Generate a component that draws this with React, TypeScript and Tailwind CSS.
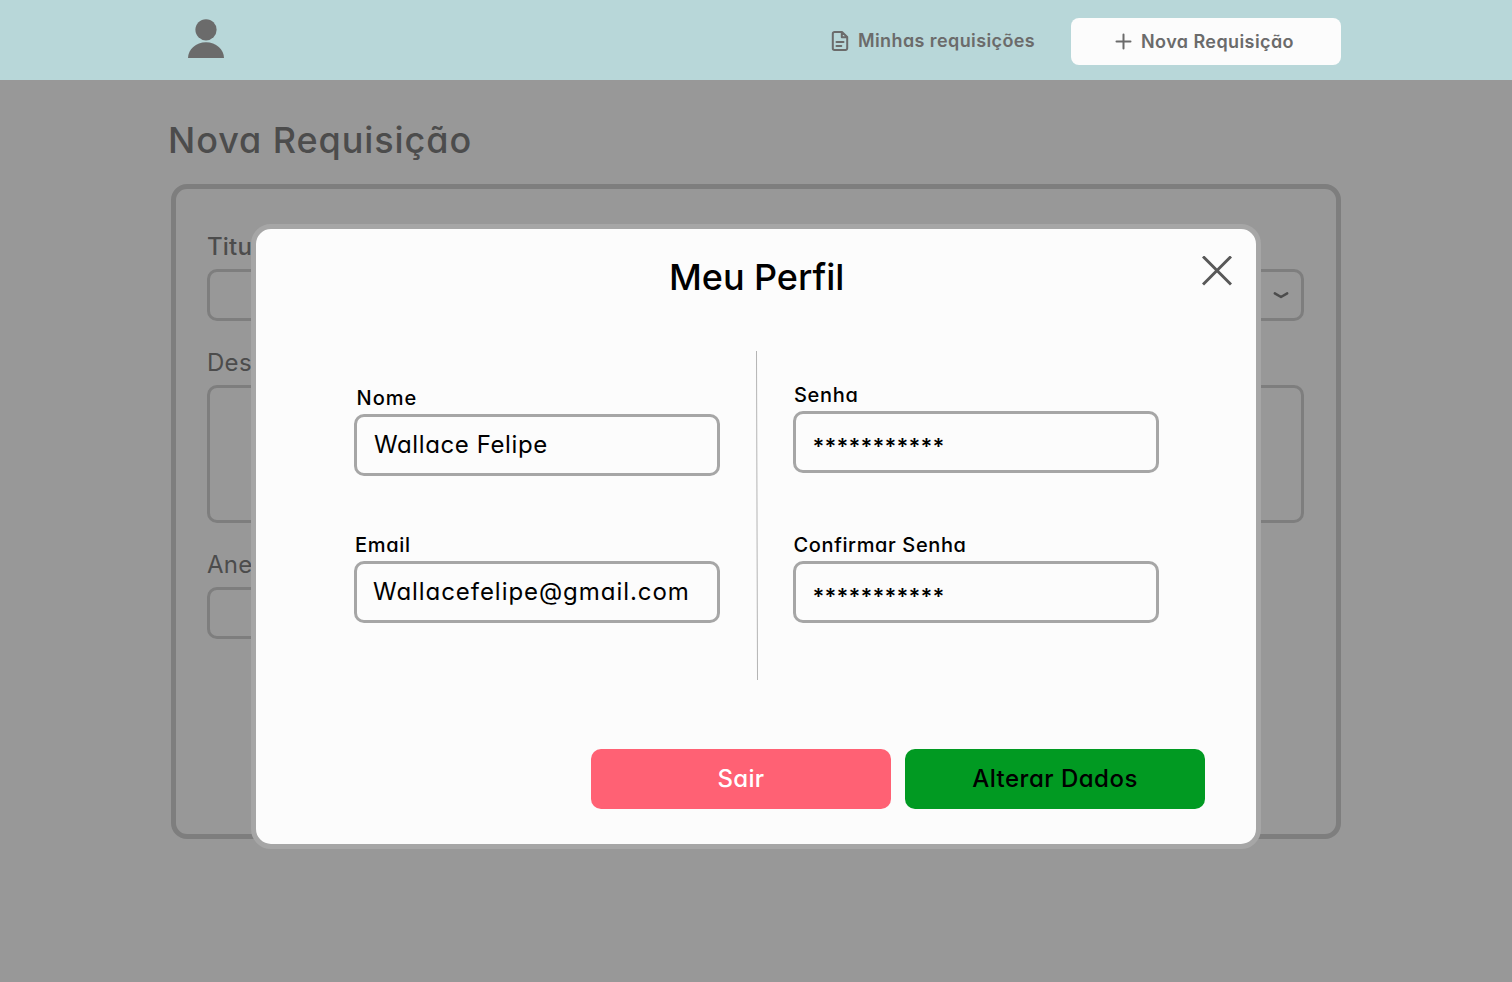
import type { ReactNode } from "react";

function Field({ label, labelClass, children }: { label: string; labelClass: string; children: ReactNode }) {
  return (
    <div className="w-[366px]">
      <div className={`h-[30px] text-xl leading-[30px] font-medium whitespace-nowrap ${labelClass}`}>{label}</div>
      <div className="mt-px flex h-[62px] items-center rounded-[10px] border-[3px] border-[#a6a6a6] whitespace-nowrap">
        {children}
      </div>
    </div>
  );
}

function Password() {
  return <span className="pt-[8px] pl-[16.500px] text-[22px] leading-[30px] font-semibold tracking-[0.12px]">***********</span>;
}

export default function App() {
  return (
    <div className="relative h-[982px] w-[1512px] overflow-hidden bg-[#989898] font-['Inter',sans-serif] [font-feature-settings:'cv11']">
      <header className="flex h-20 items-start bg-[#b8d7d9] pl-[188px] text-lg font-semibold text-[#6b6b6b]">
        <svg className="mt-[18px] h-[41px] w-9" viewBox="0 0 36 41" fill="#6b6b6b">
          <circle cx="18" cy="11.8" r="10.6" />
          <path d="M0 40.1C0 31.5 8 24.2 18 24.2s18 7.300 18 15.900z" />
        </svg>
        <a className="mt-[26px] ml-[606px] flex h-[30px] w-[241px] items-center whitespace-nowrap">
          <svg className="h-[22px] w-5 shrink-0" viewBox="0 0 20 22" fill="none" stroke="#6b6b6b" strokeWidth="2" strokeLinecap="round" strokeLinejoin="round">
            <path d="M12 2H4.500A1.700 1.700 0 0 0 2.800 3.700v14.600A1.700 1.700 0 0 0 4.500 20h11a1.700 1.700 0 0 0 1.700-1.700V7zM11.800 2v5.300h5.200M6.500 12h7M6.500 16h4.800" />
          </svg>
          <span className="ml-2 tracking-[0.4px]">Minhas requisições</span>
        </a>
        <button className="mt-[18px] flex h-[47px] w-[270px] items-center rounded-lg bg-[#fcfcfc] pl-[44px] whitespace-nowrap">
          <svg className="size-[17px] shrink-0" viewBox="0 0 17 17" stroke="#6b6b6b" strokeWidth="2" strokeLinecap="round">
            <path d="M8.500 1.500v14M1.500 8.500h14" />
          </svg>
          <span className="ml-[9px] tracking-[0.42px]">Nova Requisição</span>
        </button>
      </header>

      <main className="px-[171px] text-2xl text-[#4c4c4c]">
        <h1 className="-ml-[3px] pt-[40px] text-[36px] leading-[40px] font-medium tracking-[0.92px]">Nova Requisição</h1>
        <section className="mt-[24px] h-[655px] rounded-[16px] border-[5px] border-[#7e7e7e] px-[31px] pt-[38px] leading-[40px]">
          <div className="h-[42px] font-medium tracking-[0.2px]">Titulo</div>
          <div className="flex h-[52px] w-[1097px] items-center justify-end rounded-[10px] border-[3px] border-[#7e7e7e] pr-[11px]">
            <svg className="h-[9px] w-[18px]" viewBox="0 0 18 9" fill="none" stroke="#4c4c4c" strokeWidth="2.500" strokeLinecap="round" strokeLinejoin="round">
              <path d="M2.800 2.400 9 6l6.200-3.600" />
            </svg>
          </div>
          <div className="mt-[22px] h-[42px] tracking-[0.3px]">Descrição</div>
          <div className="h-[138px] w-[1097px] rounded-[10px] border-[3px] border-[#7e7e7e]" />
          <div className="mt-[22px] h-[42px] tracking-[0.3px]">Anexo</div>
          <div className="h-[52px] w-[530px] rounded-[10px] border-[3px] border-[#7e7e7e]" />
        </section>
      </main>

      <div role="dialog" className="absolute top-[224px] left-[251px] h-[625px] w-[1010px] rounded-[20px] border-[5px] border-[#a6a6a6] bg-[#fcfcfc] text-black">
        <div className="flex h-[122px] items-start justify-between pr-6 pl-[413px]">
          <h2 className="mt-[28px] text-[36px] leading-[40px] font-medium tracking-[-0.05px] whitespace-nowrap">Meu Perfil</h2>
          <svg className="mt-[27px] size-[30px]" viewBox="0 0 30 30" stroke="#585858" strokeWidth="3">
            <path d="M1 .5l28 28M29 .5 1 28.500" />
          </svg>
        </div>
        <div className="flex h-[329px] pl-[98px]">
          <div className="flex flex-col gap-[54px] pt-[32px]">
            <Field label="Nome" labelClass="pl-[2.500px] tracking-[1px]">
              <span className="pl-[17px] text-2xl tracking-[0.6px]">Wallace Felipe</span>
            </Field>
            <Field label="Email" labelClass="pl-px tracking-[0.7px]">
              <span className="pl-[16px] text-2xl tracking-[0.95px]">Wallacefelipe@gmail.com</span>
            </Field>
          </div>
          <svg className="mx-[35px] h-[329px] w-[3px]" viewBox="0 0 3 329" stroke="#b4b4b4">
            <path d="M1.500 0 2.500 329" />
          </svg>
          <div className="flex flex-col gap-[57px] pt-[29px]">
            <Field label="Senha" labelClass="pl-px tracking-[0.7px]">
              <Password />
            </Field>
            <Field label="Confirmar Senha" labelClass="pl-[0.5px] tracking-[0.62px]">
              <Password />
            </Field>
          </div>
        </div>
        <div className="mt-[69px] flex gap-[14px] pl-[335px] text-2xl font-medium">
          <button className="h-[60px] w-[300px] rounded-[10px] bg-[#ff6174] tracking-[0.3px] text-white">Sair</button>
          <button className="h-[60px] w-[300px] rounded-[10px] bg-[#019a22] tracking-[0.5px]">Alterar Dados</button>
        </div>
      </div>
    </div>
  );
}
